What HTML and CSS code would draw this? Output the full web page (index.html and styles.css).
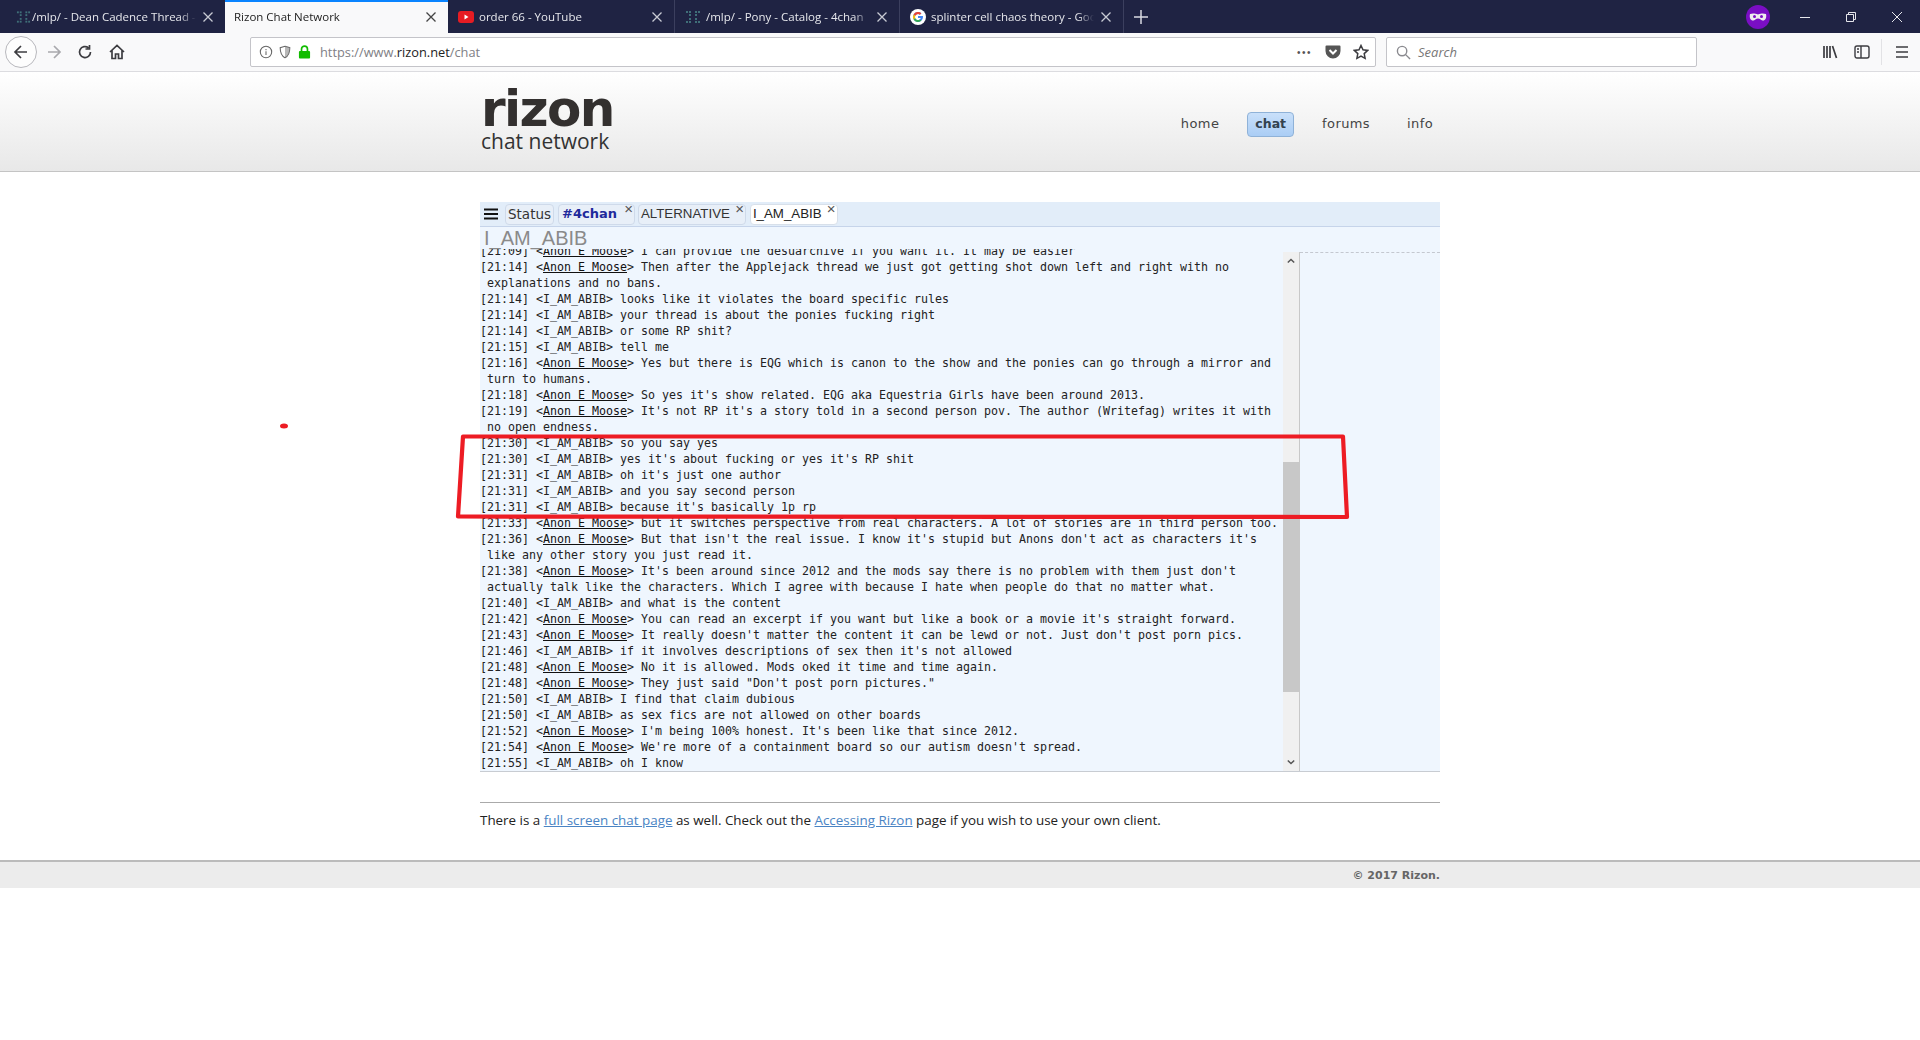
FILE: index.html
```html
<!DOCTYPE html>
<html lang="en">
<head>
<meta charset="utf-8">
<title>Rizon Chat Network</title>
<link rel="stylesheet" href="styles.css">
</head>
<body>
<div class="browser">
  <div class="tabbar">
    <div class="tab">
      <svg class="fav" viewBox="0 0 16 16"><g fill="#3f6f78"><rect x="1" y="2" width="2" height="2"/><rect x="4" y="2" width="2" height="2"/><rect x="4" y="5" width="2" height="2"/><rect x="10" y="2" width="2" height="2"/><rect x="13" y="2" width="2" height="2"/><rect x="10" y="5" width="2" height="2"/><rect x="4" y="9" width="2" height="2"/><rect x="1" y="12" width="2" height="2"/><rect x="4" y="12" width="2" height="2"/><rect x="10" y="9" width="2" height="2"/><rect x="10" y="12" width="2" height="2"/><rect x="13" y="12" width="2" height="2"/></g></svg>
      <span class="tab-title">/mlp/ - Dean Cadence Thread - Pony</span>
      <svg class="tab-x" viewBox="0 0 12 12"><path d="M1.5 1.5l9 9M10.5 1.5l-9 9"/></svg>
    </div>
    <div class="tab active">
      <span class="tab-title">Rizon Chat Network</span>
      <svg class="tab-x" viewBox="0 0 12 12"><path d="M1.5 1.5l9 9M10.5 1.5l-9 9"/></svg>
    </div>
    <div class="tab sep">
      <svg class="fav" viewBox="0 0 16 16"><rect y="2" width="16" height="12" rx="3" fill="#e61c23"/><path d="M6.5 5.5v5l4-2.500z" fill="#fff"/></svg>
      <span class="tab-title">order 66 - YouTube</span>
      <svg class="tab-x" viewBox="0 0 12 12"><path d="M1.5 1.5l9 9M10.5 1.5l-9 9"/></svg>
    </div>
    <div class="tab sep">
      <svg class="fav" viewBox="0 0 16 16"><g fill="#3f6f78"><rect x="1" y="2" width="2" height="2"/><rect x="4" y="2" width="2" height="2"/><rect x="4" y="5" width="2" height="2"/><rect x="10" y="2" width="2" height="2"/><rect x="13" y="2" width="2" height="2"/><rect x="10" y="5" width="2" height="2"/><rect x="4" y="9" width="2" height="2"/><rect x="1" y="12" width="2" height="2"/><rect x="4" y="12" width="2" height="2"/><rect x="10" y="9" width="2" height="2"/><rect x="10" y="12" width="2" height="2"/><rect x="13" y="12" width="2" height="2"/></g></svg>
      <span class="tab-title">/mlp/ - Pony - Catalog - 4chan</span>
      <svg class="tab-x" viewBox="0 0 12 12"><path d="M1.5 1.5l9 9M10.5 1.5l-9 9"/></svg>
    </div>
    <div class="tab sep sep-r">
      <svg class="fav" viewBox="0 0 16 16"><circle cx="8" cy="8" r="8" fill="#fff"/><path d="M12.900 7H8v2h2.800a3 3 0 1 1-.9-3.200l1.500-1.500A5 5 0 1 0 13 8c0-.4 0-.700-.1-1z" fill="#4285f4"/><path d="M3.600 5.600A5 5 0 0 1 11.400 4.300L9.900 5.800A3 3 0 0 0 5.300 6.800z" fill="#ea4335"/><path d="M3.600 10.400A5 5 0 0 1 3.600 5.600L5.300 6.800a3 3 0 0 0 0 2.400z" fill="#fbbc05"/><path d="M3.600 10.400l1.700-1.200A3 3 0 0 0 10 10.400l1.500 1.200A5 5 0 0 1 3.600 10.400z" fill="#34a853"/></svg>
      <span class="tab-title">splinter cell chaos theory - Google Search</span>
      <svg class="tab-x" viewBox="0 0 12 12"><path d="M1.5 1.5l9 9M10.5 1.500l-9 9"/></svg>
    </div>
    <svg class="newtab" viewBox="0 0 14 14"><path d="M7 0v14M0 7h14"/></svg>
    <svg class="mask" viewBox="0 0 24 24"><ellipse cx="12" cy="12" rx="12" ry="12" fill="#7a0ec4"/><path d="M4 9c3-1 5-.5 8 .5 3-1 5-1.500 8-.5 1 4-1 7-3.500 6.500-2-.4-2.500-2-4.500-2s-2.500 1.600-4.500 2C5 16 3 13 4 9z" fill="#eee"/><circle cx="8.500" cy="11.500" r="1.500" fill="#7a0ec4"/><circle cx="15.500" cy="11.500" r="1.500" fill="#7a0ec4"/></svg>
    <svg class="win win-min" viewBox="0 0 10 10"><path d="M0 5.500h10"/></svg>
    <svg class="win win-max" viewBox="0 0 10 10"><path d="M.5 2.500h7v7h-7zM2.500 2.500v-2h7v7h-2"/></svg>
    <svg class="win win-close" viewBox="0 0 10 10"><path d="M0 0l10 10M10 0L0 10"/></svg>
  </div>
  <div class="toolbar">
    <div class="back"><svg viewBox="0 0 16 16"><path d="M14 8H2.500M8 2L2 8l6 6"/></svg></div>
    <svg class="tool fwd" viewBox="0 0 16 16"><path d="M2 8h11.500M8 2l6 6-6 6"/></svg>
    <svg class="tool reload" viewBox="0 0 16 16"><path d="M13.500 8A5.500 5.500 0 1 1 11.500 3.800M12.500 1v4h-4"/></svg>
    <svg class="tool home" viewBox="0 0 16 16"><path d="M1 8l7-6.500L15 8M3 6.500V14.500h3.500V10h3v4.500H13V6.500"/></svg>
    <div class="urlbar">
      <svg class="ub-ico" viewBox="0 0 16 16"><circle cx="8" cy="8" r="6.500"/><path d="M8 7v4.500M8 4.500v1.500"/></svg>
      <svg class="ub-ico" viewBox="0 0 16 16"><path d="M8 1.500l5.500 1.500c0 5-1 9-5.500 11.500C3.500 12 2.500 8 2.500 3z"/><path class="ub-fill" d="M8 1.500l5.500 1.500c0 5-1 9-5.500 11.500z"/></svg>
      <svg class="lock" viewBox="0 0 14 16"><path d="M2 7h10a1 1 0 0 1 1 1v6a1 1 0 0 1-1 1H2a1 1 0 0 1-1-1V8a1 1 0 0 1 1-1z" fill="#12bc00"/><path d="M3.800 7V4.800a3.200 3.200 0 0 1 6.400 0V7" fill="none" stroke="#12bc00" stroke-width="1.800"/></svg>
      <span class="url">https://www.<b>rizon.net</b>/chat</span>
      <span class="dots">•••</span>
      <svg class="pocket" viewBox="0 0 16 16"><path d="M1.500 1.500h13A1 1 0 0 1 15.500 2.500V7a7.500 7.500 0 0 1-15 0V2.500a1 1 0 0 1 1-1z" fill="#555"/><path d="M4.500 6L8 9.500 11.500 6" fill="none" stroke="#fff" stroke-width="2"/></svg>
      <svg class="star" viewBox="0 0 16 16"><path d="M8 1.500l2 4.300 4.700.6-3.500 3.200.9 4.700L8 12l-4.100 2.300.9-4.700L1.300 6.400 6 5.800z"/></svg>
    </div>
    <div class="searchbar">
      <svg class="sb-ico" viewBox="0 0 16 16"><circle cx="6.500" cy="6.500" r="5"/><path d="M10 10l5 5"/></svg>
      <span>Search</span>
    </div>
    <svg class="tool lib" viewBox="0 0 16 16"><path d="M2 2v12M5 2v12M8 2v12M10.500 2l4 12"/></svg>
    <svg class="tool side" viewBox="0 0 16 16"><rect x="1" y="2" width="14" height="12" rx="2"/><path d="M7 2v12M3 5h2M3 8h2"/></svg>
    <div class="tool-sep"></div>
    <svg class="tool menu" viewBox="0 0 16 16"><path d="M2 3h12M2 8h12M2 13h12"/></svg>
  </div>
</div>

<header class="site-head">
  <div class="wrap head-row">
    <div class="logo">
      <div class="logo-big">rizon</div>
      <div class="logo-small">chat network</div>
    </div>
    <nav class="nav">
      <a>home</a>
      <a class="on">chat</a>
      <a>forums</a>
      <a>info</a>
    </nav>
  </div>
</header>

<main class="wrap">
  <section class="chat">
    <div class="chat-tabs">
      <svg class="ham" viewBox="0 0 14 12"><path d="M0 1.500h14M0 6h14M0 10.500h14"/></svg>
      <div class="ctab">Status</div>
      <div class="ctab bold">#4chan<i>×</i></div>
      <div class="ctab arial">ALTERNATIVE<i>×</i></div>
      <div class="ctab arial cur">I_AM_ABIB<i>×</i></div>
    </div>
    <div class="chat-title">I_AM_ABIB</div>
    <div class="chat-body">
      <div class="log">
        <p>[21:09] &lt;<u>Anon E Moose</u>&gt; I can provide the desuarchive if you want it. It may be easier</p>
        <p>[21:14] &lt;<u>Anon E Moose</u>&gt; Then after the Applejack thread we just got getting shot down left and right with no explanations and no bans.</p>
        <p>[21:14] &lt;I_AM_ABIB&gt; looks like it violates the board specific rules</p>
        <p>[21:14] &lt;I_AM_ABIB&gt; your thread is about the ponies fucking right</p>
        <p>[21:14] &lt;I_AM_ABIB&gt; or some RP shit?</p>
        <p>[21:15] &lt;I_AM_ABIB&gt; tell me</p>
        <p>[21:16] &lt;<u>Anon E Moose</u>&gt; Yes but there is EQG which is canon to the show and the ponies can go through a mirror and turn to humans.</p>
        <p>[21:18] &lt;<u>Anon E Moose</u>&gt; So yes it's show related. EQG aka Equestria Girls have been around 2013.</p>
        <p>[21:19] &lt;<u>Anon E Moose</u>&gt; It's not RP it's a story told in a second person pov. The author (Writefag) writes it with no open endness.</p>
        <p>[21:30] &lt;I_AM_ABIB&gt; so you say yes</p>
        <p>[21:30] &lt;I_AM_ABIB&gt; yes it's about fucking or yes it's RP shit</p>
        <p>[21:31] &lt;I_AM_ABIB&gt; oh it's just one author</p>
        <p>[21:31] &lt;I_AM_ABIB&gt; and you say second person</p>
        <p>[21:31] &lt;I_AM_ABIB&gt; because it's basically 1p rp</p>
        <p>[21:33] &lt;<u>Anon E Moose</u>&gt; but it switches perspective from real characters. A lot of stories are in third person too.</p>
        <p>[21:36] &lt;<u>Anon E Moose</u>&gt; But that isn't the real issue. I know it's stupid but Anons don't act as characters it's like any other story you just read it.</p>
        <p>[21:38] &lt;<u>Anon E Moose</u>&gt; It's been around since 2012 and the mods say there is no problem with them just don't actually talk like the characters. Which I agree with because I hate when people do that no matter what.</p>
        <p>[21:40] &lt;I_AM_ABIB&gt; and what is the content</p>
        <p>[21:42] &lt;<u>Anon E Moose</u>&gt; You can read an excerpt if you want but like a book or a movie it's straight forward.</p>
        <p>[21:43] &lt;<u>Anon E Moose</u>&gt; It really doesn't matter the content it can be lewd or not. Just don't post porn pics.</p>
        <p>[21:46] &lt;I_AM_ABIB&gt; if it involves descriptions of sex then it's not allowed</p>
        <p>[21:48] &lt;<u>Anon E Moose</u>&gt; No it is allowed. Mods oked it time and time again.</p>
        <p>[21:48] &lt;<u>Anon E Moose</u>&gt; They just said "Don't post porn pictures."</p>
        <p>[21:50] &lt;I_AM_ABIB&gt; I find that claim dubious</p>
        <p>[21:50] &lt;I_AM_ABIB&gt; as sex fics are not allowed on other boards</p>
        <p>[21:52] &lt;<u>Anon E Moose</u>&gt; I'm being 100% honest. It's been like that since 2012.</p>
        <p>[21:54] &lt;<u>Anon E Moose</u>&gt; We're more of a containment board so our autism doesn't spread.</p>
        <p>[21:55] &lt;I_AM_ABIB&gt; oh I know</p>
      </div>
      <div class="scroll">
        <svg class="sc-arrow" viewBox="0 0 10 6"><path d="M1 5l4-4 4 4"/></svg>
        <div class="sc-track"><div class="sc-thumb"></div></div>
        <svg class="sc-arrow" viewBox="0 0 10 6"><path d="M1 1l4 4 4-4"/></svg>
      </div>
      <div class="nicks"></div>
    </div>
  </section>
  <hr class="rule">
  <p class="note">There is a <a>full screen chat page</a> as well. Check out the <a>Accessing Rizon</a> page if you wish to use your own client.</p>
</main>

<footer class="site-foot">
  <div class="wrap foot-text">© 2017 Rizon.</div>
</footer>

<svg class="markup" viewBox="0 0 1920 1040">
  <path d="M463 436.500L1343 436.500L1347 517L458 516.500L463 436.500" />
  <ellipse cx="284" cy="426" rx="4" ry="2.500" />
</svg>
</body>
</html>
```
FILE: styles.css
```css
* { box-sizing: border-box; }
html, body { margin: 0; padding: 0; background: #fff; }
body { height: 1040px; overflow: hidden; position: relative; font-family: "Open Sans", sans-serif; color: #222; }

/* browser chrome */
.browser { height: 72px; }
.tabbar { height: 33px; background: #1f2343; display: flex; align-items: center; color: #e6e7ec; font-size: 11.500px; }
.tab { width: 225px; height: 33px; flex: none; display: flex; align-items: center; padding: 0 11px 0 16px; border-right: 0 solid #3b3f5e; }
.tab.sep { border-left: 1px solid #3b3f5e; padding-left: 10px; }
.tab.sep-r { border-right-width: 1px; }
.tab.active { width: 223px; background: #f9f9fa; color: #222; border-top: 2px solid #0a84ff; padding-left: 9px; padding-bottom: 2px; }
.tab.active + .tab { border-left: 0; width: 226px; }
.fav { width: 16px; height: 16px; flex: none; margin-right: 5px; }
.tab:first-child .fav { width: 15px; margin-right: 1px; }
.tab-title { flex: 1; min-width: 0; white-space: nowrap; overflow: hidden; -webkit-mask-image: linear-gradient(to right, #000 90%, transparent 100%); mask-image: linear-gradient(to right, #000 90%, transparent 100%); }
.tab-x { width: 12px; height: 12px; flex: none; margin-left: 6px; fill: none; stroke: #c8cad4; stroke-width: 1.300; }
.active .tab-x { stroke: #444; }
.newtab { width: 14px; height: 14px; margin-left: 10px; fill: none; stroke: #d9dae2; stroke-width: 1.500; flex: none; }
.mask { width: 24px; height: 24px; margin-left: auto; flex: none; }
.win { width: 10px; height: 10px; flex: none; fill: none; stroke: #e6e7ec; stroke-width: 1; }
.win-min { margin-left: 30px; }
.win-max { margin-left: 36px; }
.win-close { margin-left: 36px; margin-right: 18px; }

.toolbar { height: 39px; background: #f9f9fa; border-bottom: 1px solid #dcdce0; display: flex; align-items: center; padding-left: 5px; }
.back { width: 32px; height: 32px; border-radius: 50%; border: 1px solid #b8b8bd; background: #fdfdfd; display: flex; align-items: center; justify-content: center; flex: none; }
.back svg { width: 16px; height: 16px; fill: none; stroke: #3c3c40; stroke-width: 1.700; }
.tool { width: 16px; height: 16px; flex: none; fill: none; stroke: #3c3c40; stroke-width: 1.700; }
.fwd { margin-left: 9px; stroke: #a9a9ad; }
.reload { margin-left: 15px; }
.home { margin-left: 16px; }
.urlbar { width: 1126px; height: 30px; margin-left: 125px; background: #fff; border: 1px solid #c4c4c9; border-radius: 2px; display: flex; align-items: center; padding-left: 8px; flex: none; }
.ub-ico { width: 14px; height: 14px; flex: none; fill: none; stroke: #666; stroke-width: 1.200; margin-right: 5px; }
.ub-fill { fill: #888; stroke: none; opacity: .6; }
.lock { width: 13px; height: 16px; flex: none; margin-left: 1px; }
.url { margin-left: 9px; font-size: 12.800px; color: #808085; font-family: "Open Sans", sans-serif; }
.url b { font-weight: 400; color: #222; }
.dots { margin-left: auto; font-size: 10px; letter-spacing: 1.500px; color: #555; font-family: "Liberation Sans", sans-serif; }
.pocket { width: 16px; height: 16px; margin-left: 13px; flex: none; }
.star { width: 16px; height: 16px; margin-left: 12px; margin-right: 6px; flex: none; fill: none; stroke: #3c3c40; stroke-width: 1.500; }
.searchbar { width: 311px; height: 30px; margin-left: 10px; background: #fff; border: 1px solid #c4c4c9; border-radius: 2px; display: flex; align-items: center; padding-left: 9px; flex: none; font-size: 13px; font-style: italic; color: #777; }
.sb-ico { width: 15px; height: 15px; margin-right: 7px; fill: none; stroke: #8a8a8f; stroke-width: 1.500; }
.lib { margin-left: 125px; }
.side { margin-left: 16px; stroke-width: 1.400; }
.tool-sep { width: 1px; height: 26px; background: #e2e2e5; margin-left: 11px; flex: none; }
.menu { margin-left: 12px; }

/* site */
.wrap { width: 960px; margin: 0 auto; }
.site-head { height: 100px; background: linear-gradient(#fff, #e8e8e8); border-bottom: 1px solid #c4c4c4; }
.head-row { display: flex; justify-content: space-between; height: 99px; }
.logo { padding: 15px 0 0 1px; color: #333; line-height: 1; }
.logo-big { font-family: "DejaVu Sans", sans-serif; font-weight: 700; font-size: 50px; line-height: 44px; letter-spacing: -1.600px; color: #33302f; }
.logo-small { font-family: "Open Sans", sans-serif; font-size: 21px; line-height: 20px; color: #333; }
.nav { display: flex; gap: 19px; align-items: flex-start; padding-top: 40px; margin-right: -2px; font-family: "DejaVu Sans", sans-serif; font-size: 13px; color: #444; }
.nav a { padding: 0 8px; height: 25px; line-height: 22px; border: 1px solid transparent; border-radius: 4px; letter-spacing: .4px; }
.nav a.on { background: linear-gradient(#c9e0fa, #aacdf5); border-color: #8fb2d8; font-weight: 700; font-size: 12.500px; color: #33424f; padding: 0 7px; letter-spacing: 0; }

.chat { margin-top: 30px; height: 570px; background: #eff6fe; border-bottom: 1px solid #c8ccd2; display: flex; flex-direction: column; }
.chat-tabs { height: 25px; flex: none; background: #e2edf9; border-bottom: 1px solid #c6d4ea; display: flex; align-items: flex-start; padding: 2px 0 0 4px; gap: 4px; }
.ham { width: 14px; height: 12px; margin: 4px 3px 0 0; fill: none; stroke: #111; stroke-width: 2; flex: none; }
.ctab { height: 21px; line-height: 18px; padding: 0 2px; border: 1px solid #cfdaea; border-radius: 4px; background: #e8eff8; font-family: "DejaVu Sans", sans-serif; font-size: 13.500px; color: #333; position: relative; white-space: nowrap; }
.ctab.bold { font-weight: 700; font-size: 13px; color: #1f2a9c; padding: 0 17px 0 3px; margin-right: -1px; }
.ctab.arial { font-family: "Liberation Sans", sans-serif; font-size: 13.300px; padding: 0 15px 0 2px; }
.ctab.cur { background: #fff; color: #222; border-color: #d8e0ea; }
.ctab i { position: absolute; right: 1px; top: -5px; font-style: normal; font-size: 15px; font-family: "Liberation Sans", sans-serif; color: #555; font-weight: 400; }
.chat-title { height: 22px; flex: none; padding-left: 4px; font-family: "Liberation Sans", sans-serif; font-size: 20px; line-height: 22px; color: #8a8a8a; }
.chat-body { flex: 1; min-height: 0; display: flex; }
.log { width: 803px; flex: none; overflow: hidden; font-family: "DejaVu Sans Mono", monospace; font-size: 11.630px; line-height: 16px; color: #222; }
.log p { margin: 0; padding-left: 7px; text-indent: -7px; }
.log p:first-child { margin-top: -6px; }
.log u { color: #111; }
.scroll { width: 17px; flex: none; margin-top: 3px; background: #f0f0f0; border-right: 1px solid #c8c8c8; display: flex; flex-direction: column; align-items: center; padding-bottom: 2px; }
.sc-arrow { width: 8px; height: 6px; flex: none; fill: none; stroke: #555; stroke-width: 1.800; margin: 6px 0 4px; }
.sc-track { flex: 1; width: 100%; }
.sc-thumb { height: 230px; margin-top: 194px; background: #c8c8c8; }
.nicks { flex: 1; margin-top: 3px; border-top: 1px dashed #c4c8d0; }
.rule { border: 0; border-top: 1px solid #aaa; margin: 30px 0 0; height: 1px; }
.note { margin: 8px 0 0; font-size: 13.400px; line-height: 18px; color: #222; }
.note a { color: #4a84c4; text-decoration: underline; }
.site-foot { margin-top: 31px; height: 28px; background: #ececec; border-top: 2px solid #bbb; }
.foot-text { text-align: right; font-family: "DejaVu Sans", sans-serif; font-size: 11px; font-weight: 700; line-height: 28px; color: #666; }

/* red hand-drawn annotation on top of the screenshot */
.markup { position: absolute; left: 0; top: 0; width: 1920px; height: 1040px; pointer-events: none; }
.markup path { fill: none; stroke: #ed1c24; stroke-width: 4.200; stroke-linejoin: round; stroke-linecap: round; }
.markup ellipse { fill: #ed1c24; }
```
